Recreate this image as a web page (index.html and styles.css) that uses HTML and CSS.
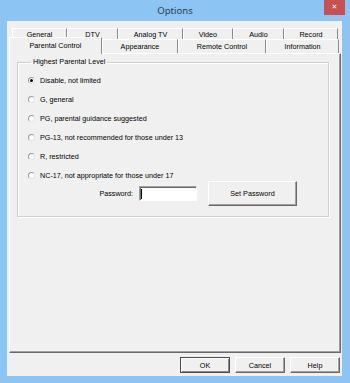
FILE: index.html
```html
<!DOCTYPE html>
<html lang="en">
<head>
    <meta charset="UTF-8">
    <meta name="viewport" content="width=device-width, initial-scale=1.0">
    <title>Options</title>

    <link rel="stylesheet" href="styles.css">
</head>
<body>
    <div class="window">
        <div class="titlebar">
            <span class="title">Options</span>
            <button class="close">&#x2715;</button>
        </div>

        <div class="client">
            <div class="tabs">
                <div class="tab-row back">
                    <div class="tab">General</div>
                    <div class="tab">DTV</div>
                    <div class="tab">Analog TV</div>
                    <div class="tab">Video</div>
                    <div class="tab">Audio</div>
                    <div class="tab">Record</div>
                </div>
                <div class="tab-row front">
                    <div class="tab active">Parental Control</div>
                    <div class="tab">Appearance</div>
                    <div class="tab">Remote Control</div>
                    <div class="tab">Information</div>
                </div>
            </div>

            <div class="panel">
                <fieldset class="group">
                    <legend>Highest Parental Level</legend>
                    <ul class="levels">
                        <li><span class="radio checked"></span>Disable, not limited</li>
                        <li><span class="radio"></span>G, general</li>
                        <li><span class="radio"></span>PG, parental guidance suggested</li>
                        <li><span class="radio"></span>PG-13, not recommended for those under 13</li>
                        <li><span class="radio"></span>R, restricted</li>
                        <li><span class="radio"></span>NC-17, not appropriate for those under 17</li>
                    </ul>
                    <div class="password-row">
                        <label for="password">Password:</label>
                        <div class="input" id="password"><span class="caret"></span></div>
                        <button class="btn set-password">Set Password</button>
                    </div>
                </fieldset>
            </div>

            <div class="actions">
                <button class="btn default">OK</button>
                <button class="btn">Cancel</button>
                <button class="btn">Help</button>
            </div>
        </div>
    </div>
</body>
</html>
```

FILE: styles.css
```css
body {
    margin: 0;
    padding: 0;
    font-family: "Liberation Sans", Arial, sans-serif;
    font-size: 7.2px;
    color: #000;
}

.window {
    width: 350px;
    height: 383px;
    background-color: #8cc4f4;
    display: flex;
    flex-direction: column;
}

.titlebar {
    height: 21px;
    display: grid;
    grid-template-columns: 1fr auto 1fr;
    align-items: center;
}

.title {
    grid-column: 2;
    font-family: "Noto Sans", "Open Sans", sans-serif;
    font-size: 9.6px;
    color: #2e3f50;
}

.close {
    grid-column: 3;
    justify-self: end;
    align-self: start;
    margin-right: 5px;
    width: 21px;
    height: 15px;
    padding: 0;
    border: none;
    background-color: #c75050;
    color: #fff;
    font-family: "DejaVu Sans", sans-serif;
    font-size: 7px;
    font-weight: bold;
    line-height: 15px;
}

.client {
    flex: 1;
    margin: 0 8px 7px 7px;
    padding: 0 1px 3px 2px;
    background-color: #f0f0f0;
    display: flex;
    flex-direction: column;
}

/* tabs */
.tabs {
    padding-top: 7px;
}

.tab-row {
    display: grid;
}

.tab-row.back {
    margin-left: 3px;
    grid-template-columns: 55px 51px 65px 50px 51px 54px;
    grid-auto-rows: 11px;
}

.tab-row.front {
    grid-template-columns: 93px 76px 88px 73px;
    grid-auto-rows: 14px;
}

.tab {
    box-sizing: border-box;
    border-top: 1px solid #fff;
    border-left: 1px solid #fff;
    border-right: 1px solid #8a8a8a;
    display: flex;
    align-items: center;
    justify-content: center;
    white-space: nowrap;
}

.tab.active {
    position: relative;
    z-index: 1;
    align-self: start;
    height: 17px;
    margin-top: -2px;
    margin-bottom: -3px;
    padding-bottom: 2px;
    background-color: #f0f0f0;
}

/* tab page */
.panel {
    flex: 1;
    border-top: 1px solid #fff;
    border-left: 1px solid #fff;
    border-right: 1px solid #696969;
    border-bottom: 1px solid #696969;
    box-shadow: inset -1px -1px 0 #a0a0a0;
}

.group {
    margin: 4px 11px 0 7px;
    padding: 8px 31px 10px 10px;
    border: 1px solid #cfcfcf;
    box-shadow: 1px 1px 0 #fff, inset 1px 1px 0 #fff;
}

.group legend {
    margin-left: 3px;
    padding: 0 2px;
    line-height: 8px;
}

.levels {
    list-style: none;
    margin: 0;
    padding: 0;
    display: flex;
    flex-direction: column;
    gap: 7px;
}

.levels li {
    height: 12px;
    display: flex;
    align-items: center;
    gap: 5px;
}

.radio {
    box-sizing: border-box;
    width: 7px;
    height: 7px;
    border-radius: 50%;
    border: 1px solid;
    border-color: #9a9a9a #e4e4e4 #e4e4e4 #9a9a9a;
    background-color: #fff;
    display: flex;
    align-items: center;
    justify-content: center;
}

.radio.checked::after {
    content: "";
    width: 3px;
    height: 3px;
    border-radius: 50%;
    background-color: #000;
}

.password-row {
    display: flex;
    align-items: center;
    justify-content: flex-end;
    height: 25px;
}

.password-row label {
    margin-right: 6px;
}

.input {
    box-sizing: border-box;
    width: 58px;
    height: 15px;
    margin-right: 11px;
    background-color: #fff;
    border: 1px solid;
    border-color: #a0a0a0 #fff #fff #a0a0a0;
    box-shadow: inset 1px 1px 0 #696969;
    display: flex;
    align-items: center;
}

.caret {
    width: 1px;
    height: 10px;
    margin-left: 1px;
    background-color: #000;
}

/* buttons */
.btn {
    box-sizing: border-box;
    width: 50px;
    height: 16px;
    padding: 0;
    font-family: "Liberation Sans", Arial, sans-serif;
    font-size: 7.2px;
    color: #000;
    background-color: #f0f0f0;
    border: 1px solid;
    border-color: #fff #696969 #696969 #fff;
    box-shadow: inset -1px -1px 0 #a0a0a0;
}

.btn.default {
    border-color: #4a4a4a;
    box-shadow: inset 1px 1px 0 #fff, inset -1px -1px 0 #8a8a8a;
}

.btn.set-password {
    width: 89px;
    height: 25px;
}

.actions {
    display: flex;
    justify-content: flex-end;
    gap: 5px;
    margin-top: 4px;
    padding-right: 1px;
}
```
